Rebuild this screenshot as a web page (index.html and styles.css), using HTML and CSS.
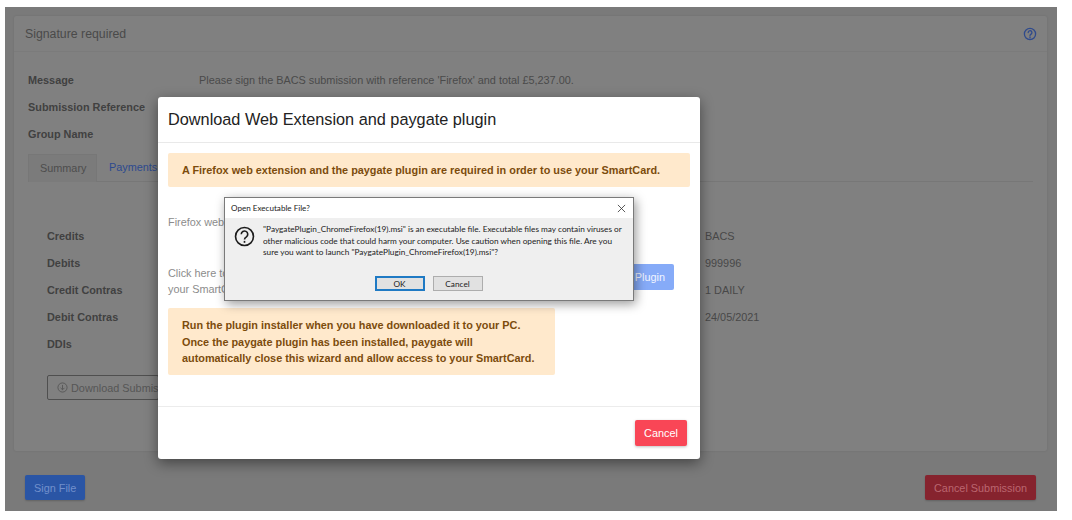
FILE: index.html
```html
<!DOCTYPE html>
<html lang="en">
<head>
<meta charset="utf-8">
<title>Signature required</title>
<link rel="stylesheet" href="styles.css">
</head>
<body>
<div class="screen">
  <section class="card">
    <header class="card-head">
      <span>Signature required</span>
      <svg class="help" viewBox="0 0 14 14" aria-hidden="true"><circle cx="7" cy="7" r="5.6"/><path d="M5.2 5.6a1.85 1.85 0 1 1 2.9 1.5c-.7.5-1.1.8-1.1 1.5"/><path d="M7 9.9v1"/></svg>
    </header>
    <div class="card-body">
      <dl class="meta">
        <dt>Message</dt><dd>Please sign the BACS submission with reference 'Firefox' and total £5,237.00.</dd>
        <dt>Submission Reference</dt><dd></dd>
        <dt>Group Name</dt><dd></dd>
      </dl>
      <nav class="tabs">
        <span class="tab active">Summary</span>
        <span class="tab link">Payments</span>
      </nav>
      <div class="summary">
        <div class="col">
          <span class="lbl">Credits</span>
          <span class="lbl">Debits</span>
          <span class="lbl">Credit Contras</span>
          <span class="lbl">Debit Contras</span>
          <span class="lbl">DDIs</span>
        </div>
        <div class="col">
          <span>BACS</span>
          <span>999996</span>
          <span>1 DAILY</span>
          <span>24/05/2021</span>
        </div>
      </div>
      <button class="download">
        <svg viewBox="0 0 12 12" aria-hidden="true"><circle cx="6" cy="6" r="5"/><path d="M6 3.2v5.2M3.9 6.4L6 8.5l2.1-2.1"/></svg>
        <span>Download Submis</span>
      </button>
    </div>
  </section>
  <footer class="page-foot">
    <button class="btn sign">Sign File</button>
    <button class="btn cancel-sub">Cancel Submission</button>
  </footer>

  <div class="modal">
    <h2 class="modal-title">Download Web Extension and paygate plugin</h2>
    <div class="modal-body">
      <div class="alert">A Firefox web extension and the paygate plugin are required in order to use your SmartCard.</div>
      <p class="step">Firefox web</p>
      <div class="plugin-row">
        <p class="step-text">Click here to<br>your SmartCard</p>
        <button class="btn plugin">Plugin</button>
      </div>
      <div class="alert wide">Run the plugin installer when you have downloaded it to your PC.<br>Once the paygate plugin has been installed, paygate will<br>automatically close this wizard and allow access to your SmartCard.</div>
    </div>
    <div class="modal-foot"><button class="btn cancel">Cancel</button></div>
  </div>

  <div class="dialog">
    <div class="dialog-title">
      <span>Open Executable File?</span>
      <svg class="close" viewBox="0 0 10 10" aria-hidden="true"><path d="M1 1l8 8M9 1l-8 8"/></svg>
    </div>
    <div class="dialog-body">
      <svg class="ask" viewBox="0 0 22 22" aria-hidden="true"><circle cx="11" cy="11" r="9.4"/><path d="M7.6 8.6a3.4 3.4 0 1 1 5.4 2.8c-1.2.8-2 1.4-2 2.7"/><path d="M11 15.6v2"/></svg>
      <p>"PaygatePlugin_ChromeFirefox(19).msi" is an executable file. Executable files may contain viruses or other malicious code that could harm your computer. Use caution when opening this file. Are you sure you want to launch "PaygatePlugin_ChromeFirefox(19).msi"?</p>
    </div>
    <div class="dialog-actions">
      <button class="win default">OK</button>
      <button class="win">Cancel</button>
    </div>
  </div>
</div>
</body>
</html>
```
FILE: styles.css
```css
* { box-sizing: border-box; }
html, body { margin: 0; background: #fff; }
body { font-family: "Liberation Sans", Arial, sans-serif; font-size: 10.87px; color: #414141; }
.screen {
  position: relative;
  width: 1052px;
  height: 504px;
  margin: 7px 0 0 5px;
  padding: 9px 10px 0 9px;
  background: #7a7a7a;
  overflow: hidden;
}
.card {
  height: 435px;
  background: #808080;
  box-shadow: 0 0 2px rgba(0,0,0,.12);
  border-radius: 2px;
}
.card-head {
  height: 36px;
  padding: 0 10px 0 11px;
  display: flex;
  align-items: center;
  justify-content: space-between;
  border-bottom: 1px solid #7b7b7b;
  font-size: 12.3px;
  color: #4a4a4a;
}
.help { width: 14px; height: 14px; fill: none; stroke: #2f4a8c; stroke-width: 1.3; stroke-linecap: round; }
.card-body { padding: 14px 14px 0; }
.meta {
  margin: 0;
  display: grid;
  grid-template-columns: 171px 1fr;
  grid-auto-rows: 27px;
  align-items: center;
}
.meta dt { font-weight: 700; }
.meta dd { margin: 0; color: #4a4a4a; }
.tabs {
  display: flex;
  height: 28px;
  margin-top: 7px;
  border-bottom: 1px solid #777;
  width: 1005px;
}
.tab { display: flex; align-items: center; padding: 0 12px 2px; height: 28px; }
.tab.active { width: 69px; padding: 0 11px 2px; border: 1px solid #777; border-bottom: 0; color: #4d4d4d; background: #7b7b7b; }
.tab.link { color: #2d4a8f; }
.summary {
  display: grid;
  grid-template-columns: 658px 1fr;
  margin: 40px 0 0 19px;
  color: #484848;
}
.col { display: grid; grid-auto-rows: 27px; align-items: center; white-space: nowrap; }
.lbl { font-weight: 700; color: #414141; }
.download {
  display: flex;
  align-items: center;
  gap: 3px;
  width: 112px;
  height: 25px;
  margin: 18px 0 0 19px;
  padding: 0 9px;
  background: none;
  border: 1px solid #4f4f4f;
  border-radius: 2px;
  color: #565656;
  font: 10.87px "Liberation Sans", Arial, sans-serif;
  white-space: nowrap;
  overflow: hidden;
}
.download svg { flex: none; width: 11px; height: 11px; fill: none; stroke: #565656; stroke-width: 1; }
.page-foot {
  display: flex;
  justify-content: space-between;
  padding: 24px 0 0 11px;
  width: 1022px;
}
.btn {
  height: 25px;
  border: 0;
  border-radius: 2px;
  font: 10.87px "Liberation Sans", Arial, sans-serif;
  padding: 0 9px;
  white-space: nowrap;
}
.sign { width: 60px; background: #2a55a5; color: #7290cc; box-shadow: 0 1px 2px rgba(0,0,0,.2); }
.cancel-sub { width: 111px; background: #86232e; color: #bb6670; box-shadow: 0 1px 2px rgba(0,0,0,.2); }

.modal {
  position: absolute;
  left: 153px;
  top: 90px;
  width: 542px;
  height: 362px;
  display: flex;
  flex-direction: column;
  background: #fff;
  border-radius: 3px;
  box-shadow: 0 4px 14px rgba(0,0,0,.45);
  color: #8c8c8c;
}
.modal-title {
  flex: none;
  height: 46px;
  margin: 0;
  padding: 0 10px 1px;
  display: flex;
  align-items: center;
  font-size: 16.3px;
  font-weight: 400;
  color: #222;
  border-bottom: 1px solid #e9e9e9;
}
.modal-body { flex: 1; padding: 10px 10px 0; }
.alert {
  padding: 10px 14px;
  height: 34px;
  background: #ffe9cc;
  border-radius: 2px;
  color: #7c4c0c;
  font-weight: 700;
  line-height: 14px;
  white-space: nowrap;
}
.alert.wide { width: 387px; height: 67px; padding: 9px 14px; line-height: 16.5px; margin-top: 18px; }
.step { margin: 28px 0 0; line-height: 14px; height: 14px; }
.plugin-row { display: flex; justify-content: space-between; align-items: flex-start; margin-top: 35px; padding-right: 16px; height: 26px; }
.step-text { margin: 1px 0 0; line-height: 16px; white-space: nowrap; }
.plugin { width: 108px; height: 26px; background: #86abf8; color: #f1f5ff; text-align: right; padding-right: 9px; }
.modal-foot {
  flex: none;
  height: 53px;
  padding: 13px 13px 0 0;
  display: flex;
  justify-content: flex-end;
  border-top: 1px solid #ececec;
}
.cancel { width: 52px; height: 26px; padding: 0; background: #f94656; color: #fff; box-shadow: 0 1px 3px rgba(0,0,0,.25); }

.dialog {
  position: absolute;
  left: 219px;
  top: 190px;
  width: 410px;
  height: 104px;
  background: #efefef;
  border: 1px solid #7a7a7a;
  box-shadow: 2px 3px 10px rgba(0,0,0,.4);
  font-family: Lato, "Open Sans", sans-serif;
  font-size: 8.25px;
  color: #222;
  display: flex;
  flex-direction: column;
}
.dialog-title {
  flex: none;
  height: 20px;
  background: #fff;
  padding: 0 7px 0 6px;
  display: flex;
  align-items: center;
  justify-content: space-between;
  font-size: 8.1px;
}
.close { width: 9px; height: 9px; fill: none; stroke: #333; stroke-width: .9; }
.dialog-body { flex: 1; display: flex; align-items: flex-start; padding: 6px 8px 0 9px; gap: 8px; }
.ask { flex: none; width: 21px; height: 21px; margin-top: 2px; fill: none; stroke: #1c1c1c; stroke-width: 1.7; }
.dialog-body p { margin: 0; line-height: 11.6px; }
.dialog-actions { flex: none; display: flex; justify-content: center; gap: 8px; height: 24px; padding-right: 1px; }
.win {
  width: 50px;
  height: 15px;
  padding: 0;
  background: #e1e1e1;
  border: 1px solid #adadad;
  font: 8.25px Lato, "Open Sans", sans-serif;
  color: #222;
}
.win.default { border: 2px solid #1f7ac4; }
```
